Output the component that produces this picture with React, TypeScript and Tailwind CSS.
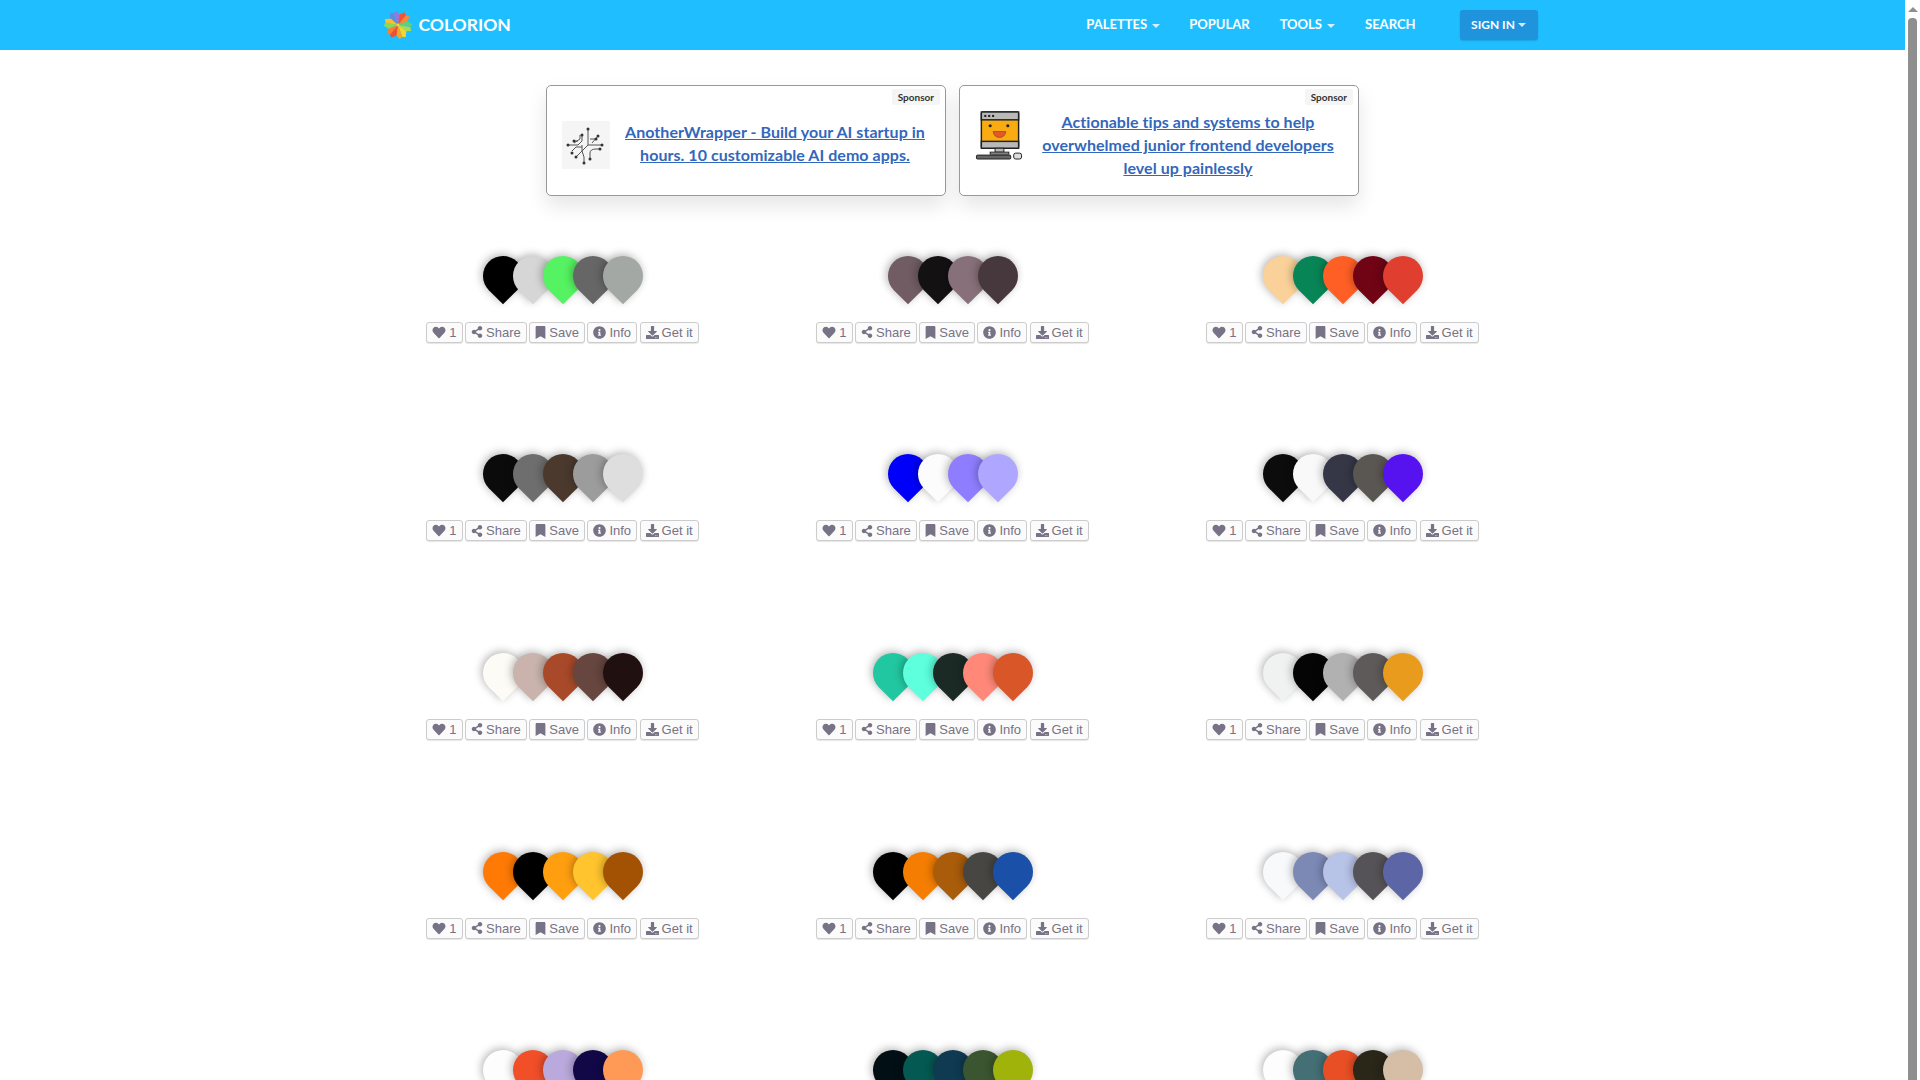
import React from "react";
import { FaHeart, FaShareAlt, FaBookmark, FaInfoCircle, FaDownload } from "react-icons/fa";

const palettes: string[][] = [
  ["#000000", "#d6d6d6", "#55f261", "#666666", "#a3a8a5"],
  ["#705c62", "#131112", "#88707b", "#47383d"],
  ["#fad299", "#088556", "#ff5f25", "#700415", "#e03f2f"],
  ["#0b0b0b", "#6e6e6e", "#4b392d", "#9c9c9c", "#dedede"],
  ["#0000fa", "#fcfcfc", "#8e7eff", "#afa6ff"],
  ["#0c0c0c", "#f9f9f9", "#353747", "#5a5753", "#5613ef"],
  ["#fcfbf5", "#c9b3ac", "#a84a2a", "#66463e", "#201010"],
  ["#21c7a0", "#5dffdd", "#1b2a25", "#ff8878", "#d85628"],
  ["#f0f2f2", "#050505", "#b1b1b1", "#5f5a5a", "#e89b1c"],
  ["#ff7a05", "#000000", "#ff9f10", "#ffc42e", "#a35203"],
  ["#010101", "#f57e02", "#a95c0a", "#484643", "#1b50a9"],
  ["#f7f9fb", "#7c89b5", "#b8c3e8", "#555357", "#5c66a7"],
  ["#fdfdfd", "#f04f28", "#b9a9dc", "#120848", "#ff9a56"],
  ["#020f14", "#045a52", "#0f3a52", "#3b5530", "#9fb30a"],
  ["#fdfdfd", "#436f75", "#e94f24", "#2a2618", "#d5bda6"],
];

function Logo() {
  const petals = [
    { r: -20, a: "#5a8de6", b: "#9a78d6" },
    { r: 40, a: "#f2552f", b: "#f58a3a" },
    { r: 100, a: "#5fcf7a", b: "#a6dc55" },
    { r: 160, a: "#f9d42e", b: "#f5a623" },
    { r: 220, a: "#ef4f35", b: "#f77f2e" },
    { r: 280, a: "#8ed65a", b: "#f2c230" },
  ];
  return (
    <svg width="30" height="28" viewBox="0 0 30 28" className="shrink-0">
      {petals.map((p) => (
        <g key={p.r} transform={`rotate(${p.r} 15 14)`}>
          <path d="M15 14 L9.5 5 L12 0 L15 1.5 Z" fill={p.a} />
          <path d="M15 14 L15 1.5 L18.5 0 L20 6 Z" fill={p.b} />
        </g>
      ))}
      <circle cx="15" cy="14" r="1.4" fill="#f9d42e" />
    </svg>
  );
}

function Caret() {
  return <span className="inline-block ml-[5px] w-0 h-0 align-middle border-x-[4px] border-x-transparent border-t-[4px] border-t-[#ffffffcc]" />;
}

function Nav() {
  return (
    <nav className="h-[50px] bg-[#1fbfff] shrink-0">
      <div className="w-[1170px] mx-auto pl-[15px] h-full flex items-center font-['Lato','Open_Sans',sans-serif] text-white">
        <div className="flex items-center">
          <Logo />
          <span className="ml-[6px] text-[17.5px] font-bold">COLORION</span>
        </div>
        <div className="ml-auto flex items-center text-[13px] font-bold">
          <span className="mr-[29px]">PALETTES<Caret /></span>
          <span className="mr-[30px]">POPULAR</span>
          <span className="mr-[30px]">TOOLS<Caret /></span>
          <span className="mr-[44px]">SEARCH</span>
          <span className="w-[78px] h-[30px] flex items-center justify-center rounded-[3px] bg-[#2093dd] text-[12px] shadow-[0_1px_2px_rgba(0,0,0,0.15)]">
            SIGN IN<span className="inline-block ml-[3px] w-0 h-0 border-x-[4px] border-x-transparent border-t-[4px] border-t-[#ffffffcc]" />
          </span>
        </div>
      </div>
    </nav>
  );
}

function Circuit() {
  const s = "#333";
  return (
    <svg viewBox="0 0 48 48" className="w-[48px] h-[48px] bg-[#f5f5f5] shrink-0">
      <g fill="none" stroke="#555" strokeWidth="1">
        <path d="M26 8 V24 L32 24 H40" />
        <path d="M20 14 V20 L16 24 H6" />
        <path d="M20 24 V30 L22 36 V42" />
        <path d="M26 24 L14 36" />
        <path d="M28 18 L34 18 M30 22 L36 15" />
        <path d="M12 22 L18 18 V14 M16 20 H12" />
        <path d="M10 30 L14 26 H20" />
        <path d="M28 38 V32 Q28 28 34 28 H38" />
      </g>
      <g fill={s}>
        {[[26,8],[40,24],[20,14],[6,24],[22,42],[34,18],[36,15],[12,20],[10,32],[14,36],[28,38],[38,28]].map(([x,y],i)=>(
          <circle key={i} cx={x} cy={y} r="1.5" />
        ))}
      </g>
    </svg>
  );
}

function Computer() {
  return (
    <svg viewBox="0 0 48 50" className="w-[48px] h-[49px] shrink-0">
      <rect x="6" y="1" width="38" height="37" rx="2" fill="#f9ac12" stroke="#222" strokeWidth="1.5" />
      <rect x="6" y="1" width="38" height="8" fill="#b9b9b9" stroke="#222" strokeWidth="1.5" />
      <rect x="6" y="31" width="38" height="7" fill="#b9b9b9" stroke="#222" strokeWidth="1.5" />
      <circle cx="10" cy="5" r="1.2" fill="#222" /><circle cx="14" cy="5" r="1.2" fill="#222" /><circle cx="18" cy="5" r="1.2" fill="#222" />
      <circle cx="15" cy="15" r="1.6" fill="#222" /><circle cx="33" cy="15" r="1.6" fill="#222" />
      <path d="M18 21 H31 Q30 27 24.5 27 Q19 27 18 21 Z" fill="#e8572a" stroke="#7a3a16" strokeWidth="0.6" />
      <rect x="20" y="38" width="9" height="4" fill="#b9b9b9" stroke="#222" />
      <rect x="15" y="42" width="19" height="2" fill="#b9b9b9" stroke="#222" />
      <rect x="1" y="45" width="35" height="4" rx="1" fill="#666" stroke="#222" />
      <rect x="39" y="43" width="8" height="6" rx="2" fill="#ddd" stroke="#222" />
    </svg>
  );
}

function Ad({ icon, children }: { icon: React.ReactNode; children: React.ReactNode }) {
  return (
    <div className="relative w-[400px] h-[111px] bg-white border border-[#999] rounded-[5px] shadow-[0_10px_20px_rgba(0,0,0,0.1)] pt-[8px] px-[15px] flex items-center">
      <span className="absolute top-[3px] right-[5px] bg-[#f5f5f5] px-[6px] h-[16px] leading-[16px] text-[10px] font-bold text-[#333] font-['Lato',sans-serif] rounded-[2px]">Sponsor</span>
      <div className="flex items-start w-full">
        {icon}
        <a className="ml-[10px] -mt-[1px] flex-1 text-center text-[16px] leading-[23px] font-bold tracking-[0.05px] text-[#3367bb] underline font-['Lato',sans-serif]">{children}</a>
      </div>
    </div>
  );
}

function Btn({ icon, label }: { icon: React.ReactNode; label: string }) {
  return (
    <span className="h-[21px] flex items-center gap-[3px] px-[5px] border border-[#ccc] rounded-[3px] bg-[#fbfbfb] shadow-[0_1px_1px_rgba(0,0,0,0.1)] text-[13px] leading-none text-[#777285] font-['Liberation_Sans',sans-serif]">
      {icon}
      {label}
    </span>
  );
}

function Palette({ colors, actions }: { colors: string[]; actions: boolean }) {
  return (
    <div className="flex flex-col items-center">
      <div className="flex h-[66px] items-start">
        {colors.map((c, i) => (
          <div
            key={i}
            className={`w-[40px] h-[40px] rounded-t-[50%] rounded-br-[50%] rotate-[-45deg] shadow-[0_-2px_8px_rgba(0,0,0,0.3)] ${i > 0 ? "-ml-[10px]" : ""}`}
            style={{ backgroundColor: c }}
          />
        ))}
      </div>
      {actions && (
        <div className="flex gap-[2.5px]">
          <Btn icon={<FaHeart className="w-[14px] h-[13px]" />} label="1" />
          <Btn icon={<FaShareAlt className="w-[12px] h-[12px]" />} label="Share" />
          <Btn icon={<FaBookmark className="w-[11px] h-[13px]" />} label="Save" />
          <Btn icon={<FaInfoCircle className="w-[13px] h-[13px]" />} label="Info" />
          <Btn icon={<FaDownload className="w-[13px] h-[13px]" />} label="Get it" />
        </div>
      )}
    </div>
  );
}

function Scrollbar() {
  return (
    <div className="w-[15px] shrink-0 flex flex-col items-center bg-white">
      <div className="mt-[7px] w-0 h-0 border-x-[5px] border-x-transparent border-b-[5px] border-b-[#8f8f8f]" />
      <div className="mt-[6px] w-[9px] flex-1 bg-[#8f8f8f] rounded-t-[4px]" />
    </div>
  );
}

export default function App() {
  return (
    <div className="h-screen overflow-hidden flex bg-white">
      <div className="flex-1 min-w-0 flex flex-col overflow-hidden">
        <Nav />
        <div className="mt-[35px] flex justify-center gap-[13px] shrink-0">
          <Ad icon={<Circuit />}>AnotherWrapper - Build your AI startup in hours. 10 customizable AI demo apps.</Ad>
          <Ad icon={<Computer />}>Actionable tips and systems to help overwhelmed junior frontend developers level up painlessly</Ad>
        </div>
        <div className="mt-[59.6px] w-[1170px] mx-auto grid grid-cols-3 auto-rows-[198.7px]">
          {palettes.map((p, i) => (
            <Palette key={i} colors={p} actions={i < 12} />
          ))}
        </div>
      </div>
      <Scrollbar />
    </div>
  );
}
